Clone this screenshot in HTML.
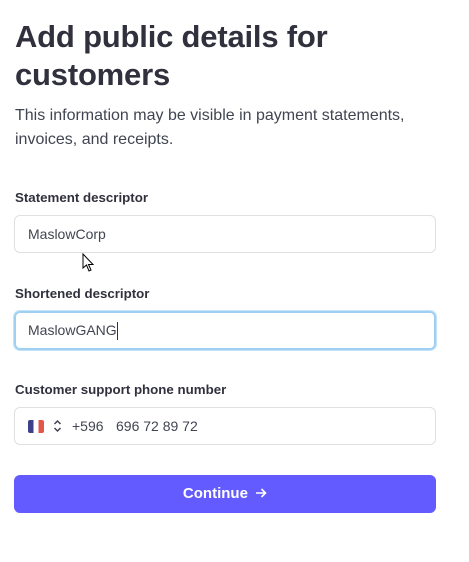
<!DOCTYPE html>
<html><head><style>
*{box-sizing:border-box;margin:0;padding:0}
body{width:469px;height:562px;background:#fff;font-family:"Liberation Sans",sans-serif;color:#30313d;position:relative;overflow:hidden}
.a{position:absolute}
h1{position:absolute;left:15px;top:18px;font-size:31px;line-height:38px;font-weight:bold;color:#30313d;letter-spacing:-0.2px}
.p{left:15px;top:104px;font-size:16px;line-height:24px;color:#414552}
.l{left:15px;font-size:13.3px;font-weight:bold;color:#30313d}
.in{left:14px;width:422px;height:38px;border:1px solid #e0e0e4;border-radius:6px;font-size:14px;padding-left:13px;line-height:36px;color:#414552}
.btn{left:14px;top:475px;width:422px;height:38px;border-radius:6px;background:#635bff;color:#fff;font-weight:bold;font-size:15px;text-align:center;line-height:38px}
</style></head><body>
<h1>Add public details for<br>customers</h1>
<div class="a p">This information may be visible in payment statements,<br>invoices, and receipts.</div>
<div class="a l" style="top:190px">Statement descriptor</div>
<div class="a in" style="top:215px">MaslowCorp</div>
<svg class="a" style="left:82px;top:253px" width="14" height="20" viewBox="0 0 14 20"><path d="M1 1 L1 15 L4.5 12 L7 18 L9 17 L6.5 11.5 L11 11.5 Z" fill="#fff" stroke="#000" stroke-width="1"/></svg>
<div class="a l" style="top:286px">Shortened descriptor</div>
<div class="a in" style="top:311px;border:2px solid #9fd0f2;box-shadow:0 0 0 1px #c5e3f8;padding-left:12px;line-height:34px;height:39px">MaslowGANG<span style="display:inline-block;width:1px;height:18px;background:#30313d;vertical-align:middle"></span></div>
<div class="a l" style="top:382px">Customer support phone number</div>
<div class="a in" style="top:407px;padding-left:0">
<span class="a" style="left:13px;top:12px;width:16px;height:13px;border-radius:2px;background:linear-gradient(90deg,#3c4189 33%,#fff 33%,#fff 66%,#e2574c 66%)"></span>
<svg class="a" style="left:38px;top:11px" width="9" height="14" viewBox="0 0 9 14"><path d="M1.5 5 L4.5 2 L7.5 5 M1.5 9 L4.5 12 L7.5 9" fill="none" stroke="#414552" stroke-width="1.5"/></svg>
<span class="a" style="left:57px;top:0">+596</span>
<span class="a" style="left:101px;top:0">696 72 89 72</span>
</div>
<div class="a btn">Continue <svg width="12" height="12" viewBox="0 0 12 12" style="vertical-align:-1px;margin-left:3px"><path d="M1 6 H10.5 M6.5 2 L10.5 6 L6.5 10" fill="none" stroke="#fff" stroke-width="1.6"/></svg></div>
</body></html>
